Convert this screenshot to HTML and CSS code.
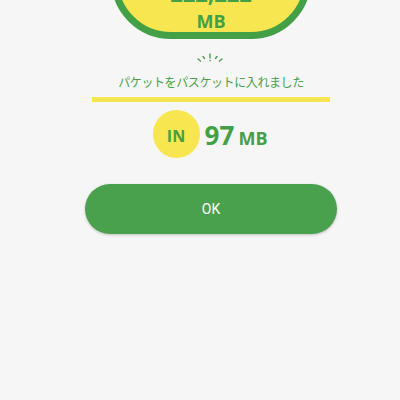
FILE: index.html
```html
<!DOCTYPE html>
<html lang="ja">
<head>
<meta charset="utf-8">
<link rel="stylesheet" href="styles.css">
</head>
<body>
<main class="page">
  <div class="meter">
    <div class="meter-value">222,222</div>
    <div class="meter-unit">MB</div>
  </div>
  <svg class="sparkle" width="28" height="10" viewBox="0 0 28 10" aria-hidden="true">
    <g stroke="#4a9f4c" stroke-width="1.4" stroke-linecap="round" fill="none">
      <line x1="2" y1="6" x2="4.5" y2="8"/>
      <line x1="7" y1="3.5" x2="8.5" y2="5.5"/>
      <line x1="14" y1="1" x2="14" y2="5"/>
      <line x1="21" y1="3.5" x2="19.5" y2="5.5"/>
      <line x1="26" y1="6" x2="23.5" y2="8"/>
    </g>
    <circle cx="14" cy="7.6" r="0.8" fill="#4a9f4c"/>
  </svg>
  <p class="msg">パケットをパスケットに入れました</p>
  <div class="bar"></div>
  <div class="stats">
    <div class="badge"><span class="badge-text">IN</span></div>
    <div class="amount"><span class="amount-num">97</span> <span class="amount-unit">MB</span></div>
  </div>
  <button class="ok">OK</button>
</main>
</body>
</html>
```
FILE: styles.css
```css
html, body {
  margin: 0;
  padding: 0;
  background: #f6f6f6;
  height: 100%;
  overflow: hidden;
}

.page {
  width: 380px;
  margin-left: 21px;
  display: flex;
  flex-direction: column;
  align-items: center;
  font-family: "Open Sans", "Noto Sans", sans-serif;
  color: #43a047;
}

.meter {
  box-sizing: border-box;
  width: 200px;
  height: 160px;
  margin-top: -121px;
  border: 7px solid #43a047;
  border-radius: 60px;
  background: #f8e650;
  display: flex;
  flex-direction: column;
  justify-content: flex-end;
  align-items: center;
  padding-bottom: 2px;
}

.meter-value {
  font-size: 22px;
  line-height: 22px;
  font-weight: 700;
}

.meter-unit {
  margin-top: 8px;
  font-size: 18px;
  line-height: 18px;
  font-weight: 700;
}

.sparkle {
  display: block;
  margin-top: 14px;
  margin-left: -3px;
}

.msg {
  margin: 11px 0 0;
  font-family: "Noto Sans CJK JP", "Noto Sans", sans-serif;
  font-size: 12px;
  line-height: 16px;
  letter-spacing: -0.4px;
  color: #4a9f4c;
}

.bar {
  margin-top: 7px;
  width: 238px;
  height: 5px;
  background: #f8e650;
}

.stats {
  margin-top: 8px;
  display: flex;
  align-items: center;
  gap: 5px;
  margin-left: -2px;
}

.badge {
  width: 47px;
  height: 48px;
  border-radius: 50%;
  background: #f8e650;
  display: flex;
  align-items: center;
  justify-content: center;
}

.badge-text {
  font-size: 16px;
  line-height: 16px;
  font-weight: 700;
  padding-top: 3px;
}

.amount {
  padding-top: 6px;
  line-height: 26px;
  font-weight: 700;
  white-space: nowrap;
}

.amount-num {
  font-size: 26px;
}

.amount-unit {
  font-size: 18px;
}

.ok {
  margin-top: 26px;
  width: 252px;
  height: 50px;
  border: none;
  border-radius: 25px;
  background: #4aa14d;
  color: #ffffff;
  font-family: Roboto, "Noto Sans", sans-serif;
  font-size: 14px;
  box-shadow: 0 1px 3px rgba(0, 0, 0, 0.22);
  padding: 0;
}
```
